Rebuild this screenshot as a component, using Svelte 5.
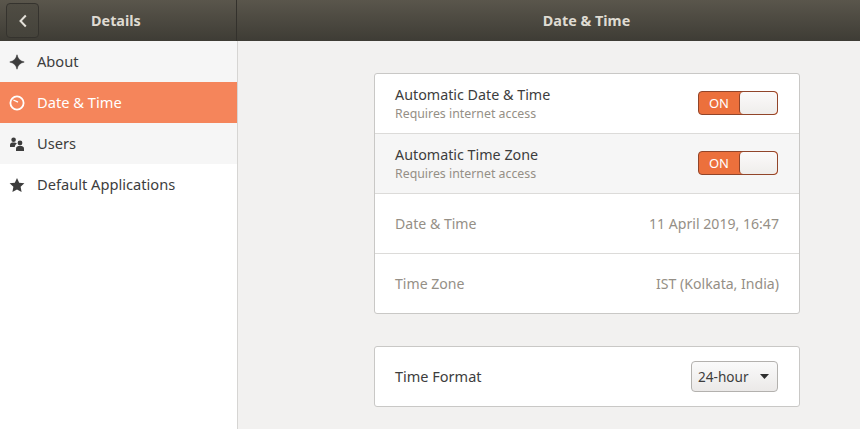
<script>
  const nav = [
    { label: 'About', icon: 'about' },
    { label: 'Date & Time', icon: 'clock', selected: true },
    { label: 'Users', icon: 'users', shaded: true },
    { label: 'Default Applications', icon: 'star', plain: true }
  ];
  const autoRows = [
    { title: 'Automatic Date & Time', shaded: false },
    { title: 'Automatic Time Zone', shaded: true }
  ];
  const infoRows = [
    { label: 'Date & Time', value: '11 April 2019, 16:47' },
    { label: 'Time Zone', value: 'IST (Kolkata, India)' }
  ];
</script>

<div class="window">
  <header class="titlebar">
    <div class="left-head">
      <button class="back" aria-label="Back">
        <svg width="16" height="16" viewBox="0 0 16 16"><path d="M10.8 2.5 L5.5 8 L10.8 13.5" fill="none" stroke="#e4e1da" stroke-width="2"/></svg>
      </button>
      <span class="head-title details">Details</span>
    </div>
    <div class="right-head"><span class="head-title">Date &amp; Time</span></div>
  </header>
  <div class="body">
    <aside class="sidebar">
      {#each nav as item}
        <div class="nav-row" class:selected={item.selected} class:plain={item.plain}>
          <span class="nav-icon">
            {#if item.icon === 'about'}
              <svg width="16" height="16" viewBox="0 0 16 16"><path d="M8 .8 C8.8 4.6 11 7 15.2 8 C11 9 8.8 11.4 8 15.2 C7.2 11.4 5 9 .8 8 C5 7 7.2 4.6 8 .8Z" fill="#3d3d3d" stroke="#3d3d3d" stroke-width=".6" stroke-linejoin="round"/></svg>
            {:else if item.icon === 'clock'}
              <svg width="16" height="16" viewBox="0 0 16 16"><circle cx="8" cy="8" r="6.6" fill="none" stroke="#fff" stroke-width="1.8"/><path d="M4.4 5 L9 7.2" fill="none" stroke="#fff" stroke-width="1.3"/></svg>
            {:else if item.icon === 'users'}
              <svg width="16" height="16" viewBox="0 0 16 16"><circle cx="4.6" cy="3.8" r="2.3" fill="#3d3d3d"/><path d="M1 11 L1 9 C1 7.2 2.5 6.6 4.6 6.6 C6 6.6 7.2 6.9 7.8 7.7 C6.4 8.4 5.8 9.6 5.8 11Z" fill="#3d3d3d"/><circle cx="11" cy="7" r="2.4" fill="#3d3d3d"/><path d="M7 15 L7 12.4 C7 10.6 8.8 10 11 10 C13.2 10 15 10.6 15 12.4 L15 15Z" fill="#3d3d3d"/></svg>
            {:else}
              <svg width="16" height="16" viewBox="0 0 16 16"><path d="M8 .9 L10.2 5.7 L15.4 6.3 L11.6 9.8 L12.6 15 L8 12.4 L3.4 15 L4.4 9.8 L.6 6.3 L5.8 5.7Z" fill="#3d3d3d"/></svg>
            {/if}
          </span>
          <span class="nav-label">{item.label}</span>
        </div>
      {/each}
    </aside>
    <main class="content">
      <section class="card">
        {#each autoRows as row}
          <div class="row" class:shaded={row.shaded}>
            <div class="stack">
              <span class="title">{row.title}</span>
              <span class="sub">Requires internet access</span>
            </div>
            <div class="switch">
              <span class="on">ON</span>
              <span class="knob"></span>
            </div>
          </div>
        {/each}
        {#each infoRows as row}
          <div class="row dim">
            <span>{row.label}</span>
            <span>{row.value}</span>
          </div>
        {/each}
      </section>
      <section class="card">
        <div class="row">
          <span class="title format">Time Format</span>
          <div class="combo">
            <span>24-hour</span>
            <svg width="9" height="5" viewBox="0 0 9 5"><path d="M0 0 H9 L4.5 5Z" fill="#2e2e2e"/></svg>
          </div>
        </div>
      </section>
    </main>
  </div>
</div>

<style>
  :global(body) {
    margin: 0;
    overflow: hidden;
  }
  .window {
    width: 860px;
    height: 429px;
    display: flex;
    flex-direction: column;
    font-family: "Noto Sans", "Liberation Sans", sans-serif;
    font-size: 14px;
    color: #3d3d3d;
    background: #f2f1f0;
  }
  .titlebar {
    height: 41px;
    flex: none;
    display: flex;
    background: linear-gradient(#5a564c, #3e3c35);
  }
  .left-head {
    width: 237px;
    flex: none;
    display: flex;
    align-items: center;
    padding-left: 6px;
    box-sizing: border-box;
    border-right: 1px solid #33312c;
    margin-right: 1px;
  }
  .back {
    width: 33px;
    height: 35px;
    padding: 0;
    display: flex;
    align-items: center;
    justify-content: center;
    background: linear-gradient(#4f4c43, #45433b);
    border: 1px solid #35332e;
    border-radius: 4px;
  }
  .details {
    margin-left: 52px;
    margin-top: -1px;
  }
  .right-head {
    flex: 1;
    display: flex;
    align-items: center;
    justify-content: center;
    padding-bottom: 1px;
    padding-left: 75px;
  }
  .head-title {
    color: #dfdbd2;
    font-weight: 700;
    font-size: 14.4px;
  }
  .body {
    flex: 1;
    display: flex;
    min-height: 0;
  }
  .sidebar {
    width: 237px;
    flex: none;
    background: #fff;
    border-right: 1px solid #d6d5d3;
  }
  .nav-row {
    height: 41px;
    display: flex;
    align-items: center;
    padding-left: 9px;
    gap: 12px;
    background: #f6f6f6;
    font-size: 14.65px;
  }
  .nav-label {
    margin-bottom: 2px;
  }
  .nav-row.plain {
    background: #fff;
  }
  .nav-row.selected {
    background: #f5855b;
    color: #fff;
  }
  .nav-icon {
    width: 16px;
    height: 16px;
    display: flex;
  }
  .content {
    flex: 1;
    padding: 32px 60px 0 136px;
    display: flex;
    flex-direction: column;
    gap: 32px;
    min-width: 0;
  }
  .card {
    background: #fff;
    border: 1px solid #c9c8c6;
    border-radius: 3px;
    overflow: hidden;
    flex: none;
  }
  .row {
    height: 59px;
    display: flex;
    align-items: center;
    justify-content: space-between;
    padding: 0 20px;
  }
  .row + .row {
    border-top: 1px solid #dcdbd9;
  }
  .row.shaded {
    background: #f6f6f6;
  }
  .row.dim {
    color: #958f86;
    font-size: 14.1px;
  }
  .stack {
    display: flex;
    flex-direction: column;
    gap: 1px;
  }
  .title {
    font-size: 14.3px;
    color: #3d3d3d;
    line-height: 19px;
  }
  .format {
    font-size: 14.5px;
  }
  .sub {
    font-size: 12.35px;
    color: #958f86;
    line-height: 17px;
  }
  .switch {
    width: 78px;
    height: 22px;
    display: flex;
    border: 1px solid #91452a;
    border-radius: 4px;
    background: #ec703c;
    overflow: hidden;
    margin: -1px 1px 0 0;
  }
  .on {
    width: 40px;
    text-align: center;
    color: #fff;
    font-size: 13px;
    line-height: 22px;
  }
  .knob {
    flex: 1;
    background: linear-gradient(#fbfafa, #efedeb);
    border-left: 1px solid #91452a;
    border-radius: 4px;
  }
  .combo {
    width: 87px;
    height: 31px;
    box-sizing: border-box;
    display: flex;
    align-items: center;
    justify-content: space-between;
    padding: 0 8px 0 6px;
    border: 1px solid #b3b1ae;
    border-radius: 4px;
    background: linear-gradient(#fafafa, #ebe9e8);
    font-size: 13.6px;
    color: #3d3d3d;
    margin-right: 1px;
  }
</style>
